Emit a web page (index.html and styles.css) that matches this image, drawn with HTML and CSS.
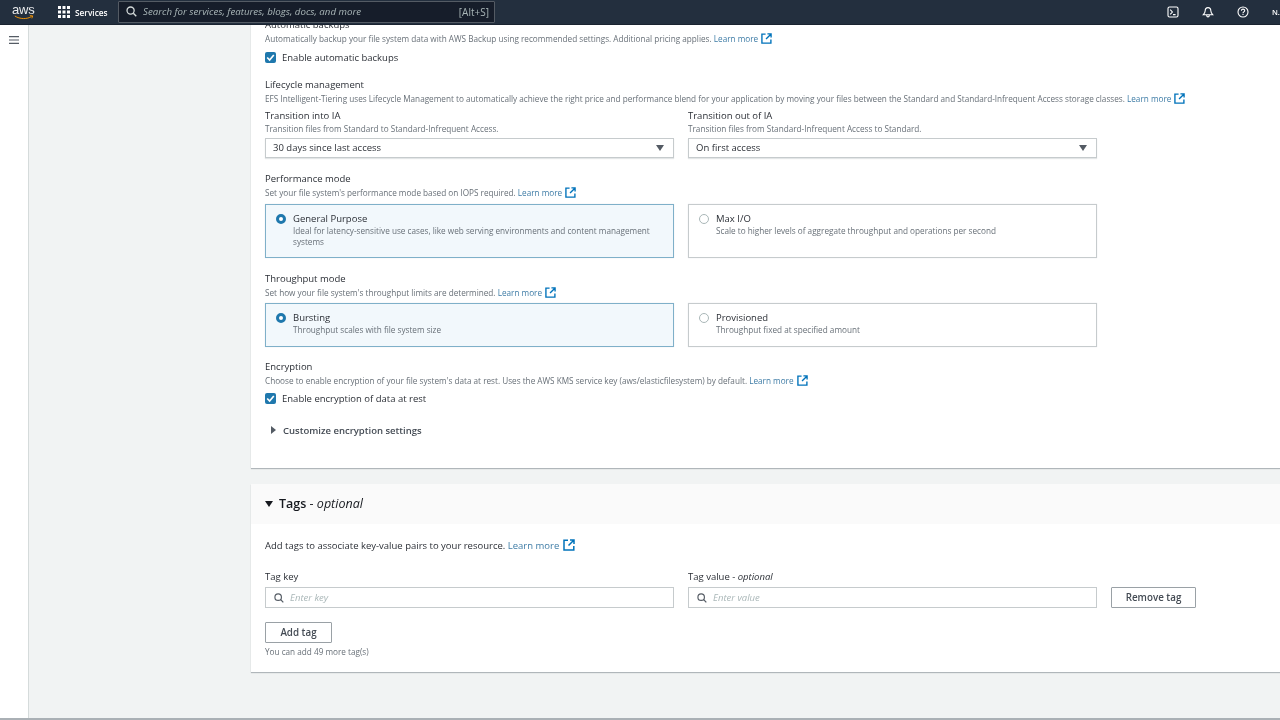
FILE: index.html
```html
<!DOCTYPE html>
<html lang="en">
<head>
<meta charset="utf-8">
<title>Create file system</title>
<link rel="stylesheet" href="styles.css">
</head>
<body>
<svg class="defs" width="0" height="0" aria-hidden="true">
  <symbol id="ext" viewBox="0 0 12 12"><path d="M5 1.200H1v9.800h9.800V7M7 1h4v4M11 1 5.500 6.500" fill="none" stroke="currentColor" stroke-width="1.500"/></symbol>
  <symbol id="search" viewBox="0 0 12 12"><circle cx="5" cy="5" r="3.900" fill="none" stroke="currentColor" stroke-width="1.400"/><path d="M8 8l3.200 3.200" stroke="currentColor" stroke-width="1.500"/></symbol>
</svg>
<header class="topbar">
  <div class="logo"><span class="logo-text">aws</span><svg class="smile" viewBox="0 0 24 6"><path d="M1 1.200c6 4 15 4 20 .6M19 .8l3.400.2-1 3" fill="none" stroke="#ff9900" stroke-width="1.100"/></svg></div>
  <div class="services">
    <svg class="grid-icon" viewBox="0 0 12 12" fill="#fff"><rect width="3" height="3"/><rect x="4.500" width="3" height="3"/><rect x="9" width="3" height="3"/><rect y="4.500" width="3" height="3"/><rect x="4.500" y="4.500" width="3" height="3"/><rect x="9" y="4.500" width="3" height="3"/><rect y="9" width="3" height="3"/><rect x="4.500" y="9" width="3" height="3"/><rect x="9" y="9" width="3" height="3"/></svg>
    <span>Services</span>
  </div>
  <div class="searchbox">
    <svg class="search-icon"><use href="#search"/></svg>
    <span class="search-ph">Search for services, features, blogs, docs, and more</span>
    <span class="search-key">[Alt+S]</span>
  </div>
  <div class="top-actions">
    <svg class="top-icon" viewBox="0 0 12 12" fill="none" stroke="#fff"><rect x="1" y="1" width="10" height="10" rx="1.500" stroke-width="1.100"/><path d="M3.200 3.600 5.400 6 3.200 8.400M6 8.600h2.600" stroke-width="1.100"/></svg>
    <svg class="top-icon" viewBox="0 0 12 12" fill="none" stroke="#fff"><path d="M6 1.600c-2 0-2.800 1.500-2.800 3.200 0 1.800-.8 2.700-2 4h9.600c-1.200-1.300-2-2.200-2-4 0-1.700-.8-3.200-2.800-3.200zM4.700 9.200c0 1 .6 1.700 1.300 1.700s1.300-.7 1.300-1.700" stroke-width="1.100"/></svg>
    <svg class="top-icon" viewBox="0 0 12 12" fill="none" stroke="#fff"><circle cx="6" cy="6" r="5" stroke-width="1.100"/><path d="M4.400 4.700c0-2.100 3.300-2.100 3.300-.1 0 1.300-1.700 1.300-1.700 2.600M6 8v1.100" stroke-width="1.100"/></svg>
    <span class="user">N.</span>
  </div>
</header>
<div class="layout">
  <aside class="sidenav">
    <svg class="menu-icon" viewBox="0 0 10 8" stroke="#545b64" stroke-width="1.100"><path d="M0 .6h10M0 4h10M0 7.400h10"/></svg>
  </aside>
  <main class="content">
    <section class="panel panel-main">
      <div class="label">Automatic backups</div>
      <div class="desc">Automatically backup your file system data with AWS Backup using recommended settings. Additional pricing applies. <a class="link">Learn more <svg class="ext"><use href="#ext"/></svg></a></div>
      <label class="check"><span class="box"><svg viewBox="0 0 10 10"><path d="M2 5l2.200 2.300L8 2.800" fill="none" stroke="#fff" stroke-width="1.500"/></svg></span>Enable automatic backups</label>

      <div class="label group">Lifecycle management</div>
      <div class="desc">EFS Intelligent-Tiering uses Lifecycle Management to automatically achieve the right price and performance blend for your application by moving your files between the Standard and Standard-Infrequent Access storage classes. <a class="link">Learn more <svg class="ext"><use href="#ext"/></svg></a></div>
      <div class="cols lifecycle">
        <div>
          <div class="label">Transition into IA</div>
          <div class="desc tight">Transition files from Standard to Standard-Infrequent Access.</div>
          <div class="select"><span>30 days since last access</span><i class="caret"></i></div>
        </div>
        <div>
          <div class="label">Transition out of IA</div>
          <div class="desc tight">Transition files from Standard-Infrequent Access to Standard.</div>
          <div class="select"><span>On first access</span><i class="caret"></i></div>
        </div>
      </div>

      <div class="label perf">Performance mode</div>
      <div class="desc">Set your file system's performance mode based on IOPS required. <a class="link">Learn more <svg class="ext"><use href="#ext"/></svg></a></div>
      <div class="cols cards tall">
        <div class="card selected"><i class="radio on"></i><div><div class="card-title">General Purpose</div><div class="desc">Ideal for latency-sensitive use cases, like web serving environments and content management systems</div></div></div>
        <div class="card"><i class="radio"></i><div><div class="card-title">Max I/O</div><div class="desc">Scale to higher levels of aggregate throughput and operations per second</div></div></div>
      </div>

      <div class="label perf">Throughput mode</div>
      <div class="desc">Set how your file system's throughput limits are determined. <a class="link">Learn more <svg class="ext"><use href="#ext"/></svg></a></div>
      <div class="cols cards short">
        <div class="card selected"><i class="radio on"></i><div><div class="card-title">Bursting</div><div class="desc">Throughput scales with file system size</div></div></div>
        <div class="card"><i class="radio"></i><div><div class="card-title">Provisioned</div><div class="desc">Throughput fixed at specified amount</div></div></div>
      </div>

      <div class="label group">Encryption</div>
      <div class="desc">Choose to enable encryption of your file system's data at rest. Uses the AWS KMS service key (aws/elasticfilesystem) by default. <a class="link">Learn more <svg class="ext"><use href="#ext"/></svg></a></div>
      <label class="check check-tight"><span class="box"><svg viewBox="0 0 10 10"><path d="M2 5l2.200 2.300L8 2.800" fill="none" stroke="#fff" stroke-width="1.500"/></svg></span>Enable encryption of data at rest</label>
      <div class="expander"><i class="tri-right"></i>Customize encryption settings</div>
    </section>

    <section class="panel panel-tags">
      <div class="tags-head"><i class="tri-down"></i><h2><b>Tags</b> - <em>optional</em></h2></div>
      <div class="tags-body">
        <div class="tags-intro">Add tags to associate key-value pairs to your resource. <a class="link">Learn more <svg class="ext"><use href="#ext"/></svg></a></div>
        <div class="tag-row">
          <div class="tag-field">
            <div class="label">Tag key</div>
            <div class="input"><svg class="input-search"><use href="#search"/></svg><span>Enter key</span></div>
          </div>
          <div class="tag-field">
            <div class="label">Tag value - <em>optional</em></div>
            <div class="input"><svg class="input-search"><use href="#search"/></svg><span>Enter value</span></div>
          </div>
          <button class="btn">Remove tag</button>
        </div>
        <button class="btn add">Add tag</button>
        <div class="desc limit">You can add 49 more tag(s)</div>
      </div>
    </section>
  </main>
</div>
</body>
</html>
```
FILE: styles.css
```css
* { box-sizing: border-box; }
html, body { margin: 0; height: 100%; }
body {
  width: 1280px;
  height: 720px;
  overflow: hidden;
  display: flex;
  flex-direction: column;
  background: #f1f3f3;
  color: #16191f;
  font-family: "Open Sans", "Noto Sans", sans-serif;
  font-size: 10px;
}
.defs { position: absolute; }
.topbar {
  flex: 0 0 25px;
  display: flex;
  align-items: center;
  background: #232f3e;
  border-bottom: 1px solid #1a2330;
  color: #fff;
  padding-left: 12px;
  position: relative;
  z-index: 2;
  filter: blur(.3px);
}
.logo { width: 24px; height: 21px; position: relative; }
.logo-text { display: block; font: 500 13px/15px "Liberation Sans", sans-serif; color: #e8eaec; letter-spacing: -.2px; }
.smile { position: absolute; left: 1px; top: 13px; width: 22px; height: 5px; }
.services { display: flex; align-items: center; gap: 5px; margin-left: 22px; font-size: 8.300px; font-weight: 600; width: 60px; }
.grid-icon { width: 12px; height: 12px; flex: none; }
.searchbox {
  width: 377px; height: 22px;
  display: flex; align-items: center;
  background: #161d2a;
  border: 1px solid #545b64;
  border-radius: 1px;
  color: #aab7b8;
  padding: 0 5px 1px 7px;
}
.search-icon { width: 11px; height: 11px; color: #d5dbdb; flex: none; }
.search-ph { margin-left: 6px; font-style: italic; font-size: 9.700px; flex: 1; }
.search-key { font-size: 10px; }
.top-actions { display: flex; align-items: center; margin-left: auto; }
.top-icon { width: 12px; height: 12px; margin-right: 23px; }
.user { font-size: 7.500px; font-weight: 600; width: 8px; overflow: hidden; white-space: nowrap; }
.layout { flex: 1; min-height: 0; display: flex; border-bottom: 2px solid #aab0b5; filter: blur(.3px); }
.sidenav { flex: 0 0 29px; background: #fff; border-right: 1px solid #d5dbdb; padding: 11px 0 0 9px; }
.menu-icon { display: block; width: 10px; height: 8px; }
.content { flex: 1; min-width: 0; padding-left: 222px; overflow: hidden; }
.panel { background: #fff; box-shadow: 0 1px 1px #b0b6ba; }
.panel-main { margin-top: -7px; height: 450px; padding-left: 14px; }
.label { font-size: 9.500px; line-height: 14px; color: #2b2f36; }
.desc { font-size: 8.200px; line-height: 13px; color: #687078; white-space: nowrap; }
.tight { line-height: 12px; }
.link { color: #3e7ca6; }
.ext { display: inline-block; width: 11px; height: 11px; margin-left: 1px; vertical-align: -2px; color: #0073bb; }
.check { display: flex; align-items: center; gap: 6px; height: 16px; margin-top: 4px; font-size: 9.500px; color: #2b2f36; }
.check-tight { margin-top: 3px; }
.box { width: 11px; height: 11px; background: #1f78ad; border-radius: 2px; display: block; flex: none; }
.box svg { display: block; width: 11px; height: 11px; }
.group { margin-top: 13px; }
.cols { display: grid; grid-template-columns: 409px 409px; gap: 14px; }
.lifecycle { margin-top: 4px; }
.select {
  height: 20px; margin-top: 3px;
  display: flex; align-items: center; justify-content: space-between;
  padding: 0 9px 1px 7px;
  border: 1px solid #c6cbcd;
  box-shadow: 0 1px 1px #e3e6e7;
  font-size: 9.500px;
  color: #2b2f36;
}
.caret { width: 0; height: 0; border-left: 4px solid transparent; border-right: 4px solid transparent; border-top: 6px solid #545b64; }
.perf { margin-top: 14px; }
.cards { margin-top: 5px; }
.cards.short { margin-top: 4px; }
.tall .card { height: 54px; }
.short .card { height: 44px; }
.card { display: flex; gap: 7px; padding: 7px 10px 0 10px; border: 1px solid #c6cbcd; box-shadow: 0 0 1px #dfe2e3; }
.card .desc { white-space: normal; line-height: 11px; }
.card.selected { background: #f2f8fc; border-color: #7fb0c9; }
.card-title { font-size: 9.500px; line-height: 13px; color: #2b2f36; }
.radio { width: 10px; height: 10px; margin-top: 2px; border-radius: 50%; border: 1px solid #aab7b8; flex: none; background: #fff; }
.radio.on { border: 3px solid #1f78ad; }
.expander { display: flex; align-items: center; gap: 7px; margin: 17px 0 0 6px; height: 14px; font-size: 9.500px; font-weight: 600; color: #444b54; }
.tri-right { width: 0; height: 0; border-top: 4px solid transparent; border-bottom: 4px solid transparent; border-left: 5px solid #545b64; }
.panel-tags { margin-top: 16px; height: 188px; }
.tags-head { height: 40px; display: flex; align-items: center; gap: 6px; padding: 0 0 1px 14px; background: #fafafa; }
.tags-head h2 { margin: 0; font-size: 12.500px; font-weight: 500; color: #16191f; }
.tags-head b { font-weight: 600; }
.tri-down { width: 0; height: 0; border-left: 4px solid transparent; border-right: 4px solid transparent; border-top: 6px solid #16191f; }
.tags-body { padding: 15px 14px 0; }
.tags-intro { font-size: 9.500px; line-height: 14px; color: #2b2f36; }
.tags-intro .ext { width: 12px; height: 12px; }
.tag-row { display: flex; align-items: flex-end; gap: 14px; margin-top: 17px; }
.tag-field { width: 409px; }
.input { height: 21px; margin-top: 3px; display: flex; align-items: center; gap: 6px; padding-left: 8px; border: 1px solid #c6cbcd; font-size: 9.500px; font-style: italic; color: #aab7b8; }
.input-search { width: 10px; height: 10px; color: #545b64; }
.btn { height: 21px; width: 85px; padding: 0; background: #fff; border: 1px solid #9aa1a6; border-radius: 1px; font: 600 9.800px "Open Sans", sans-serif; color: #444b54; }
.add { display: block; width: 67px; margin-top: 14px; }
.limit { margin-top: 2px; }
```
